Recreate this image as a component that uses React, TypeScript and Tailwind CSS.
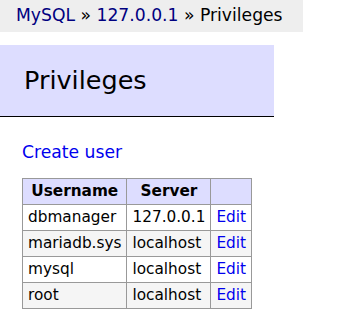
import type { FC } from 'react';

interface UserRow {
  username: string;
  server: string;
}

const users: UserRow[] = [
  { username: 'dbmanager', server: '127.0.0.1' },
  { username: 'mariadb.sys', server: 'localhost' },
  { username: 'mysql', server: 'localhost' },
  { username: 'root', server: 'localhost' },
];

const cell = 'border border-[#999] px-[5px] py-[3px] leading-[19px]';

const App: FC = () => {
  return (
    <div className="min-h-screen bg-white text-black text-[17.2px] font-['DejaVu_Sans',Verdana,sans-serif]">
      {/* breadcrumb */}
      <div className="flex h-[32px] w-[303px] items-center whitespace-nowrap bg-[#eee] pl-4">
        <a href="#" className="text-[navy] no-underline">MySQL</a>
        <span>&nbsp;»&nbsp;</span>
        <a href="#" className="text-[navy] no-underline">127.0.0.1</a>
        <span>&nbsp;»&nbsp;Privileges</span>
      </div>

      <h2 className="mt-[13px] flex h-[72px] w-[274px] items-center border-b border-black bg-[#ddf] pl-6 text-[25.5px] font-normal">
        Privileges
      </h2>

      <div className="ml-[22px] mt-[25px] leading-[21px]">
        <a href="#" className="text-[#0000ee] no-underline">Create user</a>
      </div>

      <table className="ml-[22px] mt-[15px] border-collapse text-[15.3px]">
        <thead>
          <tr className="bg-[#ddf]">
            <th className={cell}>Username</th>
            <th className={cell}>Server</th>
            <th className={cell}></th>
          </tr>
        </thead>
        <tbody>
          {users.map((u, i) => (
            <tr key={u.username} className={i % 2 === 1 ? 'bg-[#f5f5f5]' : 'bg-white'}>
              <td className={cell}>{u.username}</td>
              <td className={cell}>{u.server}</td>
              <td className={cell}>
                <a href="#" className="text-[#0000ee] no-underline">Edit</a>
              </td>
            </tr>
          ))}
        </tbody>
      </table>
    </div>
  );
};

export default App;
